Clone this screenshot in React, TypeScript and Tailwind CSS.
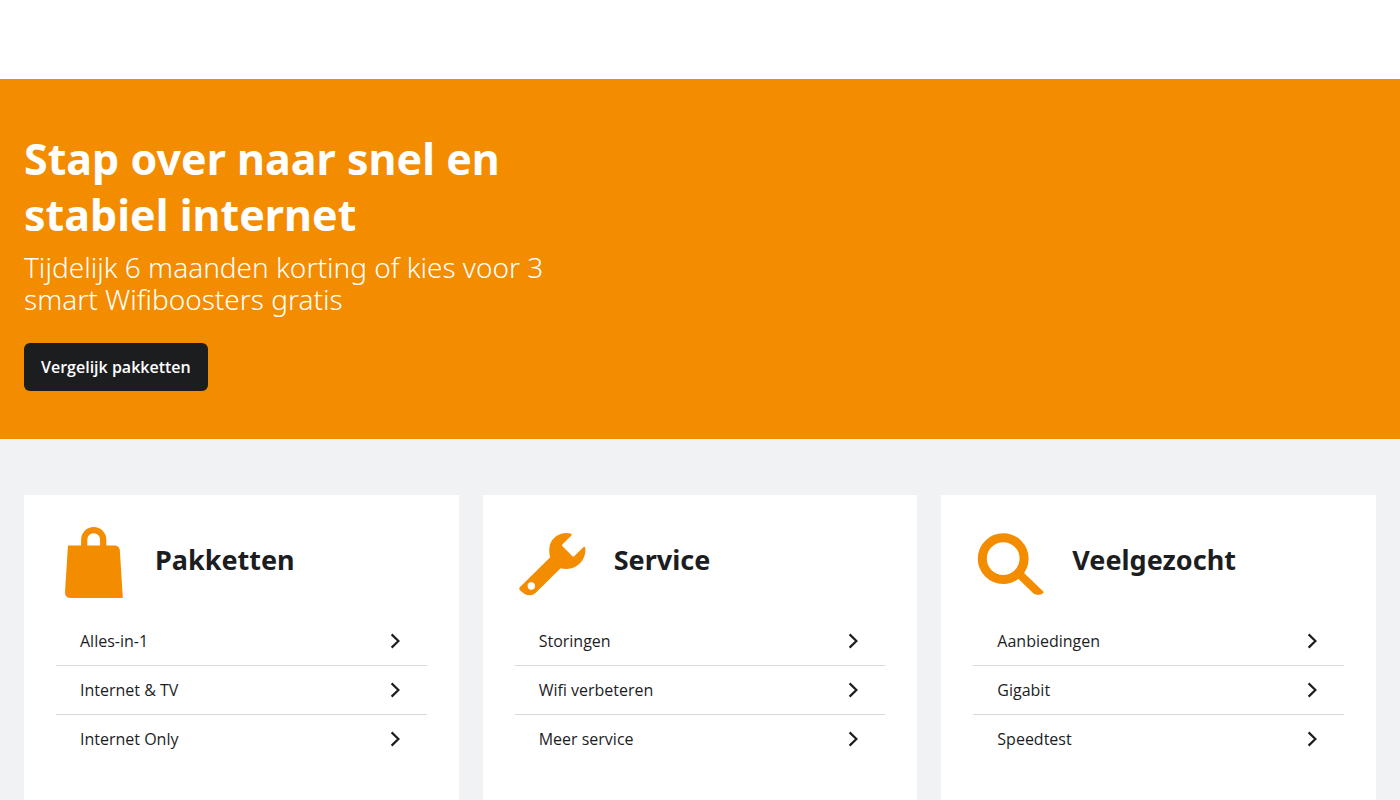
import React from "react";

type Card = {
  title: string;
  icon: React.ReactNode;
  links: string[];
};

function BagIcon() {
  return (
    <svg viewBox="0 0 75 72" className="h-[72px] w-[75px] shrink-0" aria-hidden="true">
      <path
        d="M12 18.4H58.5Q63.3 18.4 63.8 23.2L66.8 71H15Q8.8 71 9 65Z"
        fill="#f48c00"
      />
      <path
        d="M28.2 20V12.6a9.5 9.5 0 0 1 19 0V20"
        fill="none"
        stroke="#f48c00"
        strokeWidth="6.2"
      />
    </svg>
  );
}

function WrenchIcon() {
  return (
    <svg viewBox="0 0 75 72" className="h-[72px] w-[75px] shrink-0" aria-hidden="true">
      <path
        fill="#f48c00"
        fillRule="evenodd"
        d="M56.2 6.8C48 4.4 38.5 8.5 35.2 17C33.8 21 34 26.5 35.2 30.3L4.8 60.2Q3.5 61.7 4.8 63C7.5 66 11 68.3 14.5 68.3Q18 68.3 20.5 66L45.6 41.2C54.5 43.8 64 40 68.3 31.8C70.2 28 70.8 24 70.2 20.6Q69.5 19.2 68.3 20.3L59.2 29.2Q58.3 30 57.4 29.2L47.3 19Q46.6 18.3 47.3 17.6L56.2 8.8Q57.2 7.5 56.2 6.8ZM16.3 55.3a3.7 3.7 0 1 0 0 7.4a3.7 3.7 0 1 0 0-7.4Z"
      />
    </svg>
  );
}

function SearchIcon() {
  return (
    <svg viewBox="0 0 75 72" className="h-[72px] w-[75px] shrink-0" aria-hidden="true">
      <circle cx="30.2" cy="31.6" r="20.9" fill="none" stroke="#f48c00" strokeWidth="9" />
      <path
        d="M50.5 45.5L70.3 64.5Q71.3 65.6 70 66.2C66.5 68.5 62.5 68.2 60 66L44.5 51Z"
        fill="#f48c00"
      />
    </svg>
  );
}

function Chevron() {
  return (
    <svg viewBox="0 0 16 16" className="h-4 w-4 shrink-0" aria-hidden="true">
      <path d="M4.6 1.4L11.4 8L4.6 14.6" fill="none" stroke="#1c1d1f" strokeWidth="2.2" />
    </svg>
  );
}

const cards: Card[] = [
  {
    title: "Pakketten",
    icon: <BagIcon />,
    links: ["Alles-in-1", "Internet & TV", "Internet Only"],
  },
  {
    title: "Service",
    icon: <WrenchIcon />,
    links: ["Storingen", "Wifi verbeteren", "Meer service"],
  },
  {
    title: "Veelgezocht",
    icon: <SearchIcon />,
    links: ["Aanbiedingen", "Gigabit", "Speedtest"],
  },
];

function LinkCard({ title, icon, links }: Card) {
  return (
    <section className="bg-white px-8 pt-8 pb-12">
      <div className="mb-[18px] flex items-center gap-6">
        {icon}
        <h2 className="pb-1.5 font-['Noto_Sans',sans-serif] text-[27px] leading-8 font-bold">
          {title}
        </h2>
      </div>
      <ul className="divide-y divide-[#d8d9db]">
        {links.map((link) => (
          <li key={link}>
            <a href="#" className="flex h-12 items-center justify-between px-6">
              {link}
              <Chevron />
            </a>
          </li>
        ))}
      </ul>
    </section>
  );
}

export default function App() {
  return (
    <div className="min-h-screen bg-[#f0f2f4] font-['Open_Sans',sans-serif] text-base text-[#1c1d1f]">
      <header className="h-[79px] bg-white" />
      <main>
        <div className="bg-[#f48c00] px-6 pt-[52px] pb-12 text-white">
          <h1 className="max-w-[540px] font-['Noto_Sans',sans-serif] text-[43px] leading-[56px] font-bold">
            Stap over naar snel en stabiel internet
          </h1>
          <p className="mt-2 max-w-[540px] font-['Noto_Sans',sans-serif] text-[28px] leading-8 font-light">
            Tijdelijk 6 maanden korting of kies voor 3 smart Wifiboosters gratis
          </p>
          <button
            type="button"
            className="mt-7 block h-12 rounded-md bg-[#1c1d1f] px-[17px] font-semibold"
          >
            Vergelijk pakketten
          </button>
        </div>
        <div className="grid grid-cols-3 gap-6 px-6 pt-14">
          {cards.map((card) => (
            <LinkCard key={card.title} {...card} />
          ))}
        </div>
      </main>
    </div>
  );
}
